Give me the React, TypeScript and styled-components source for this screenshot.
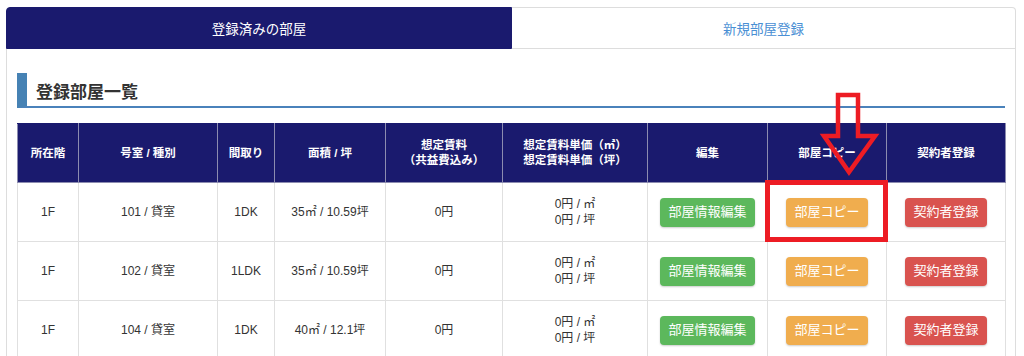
import React from 'react';
import styled, { createGlobalStyle } from 'styled-components';

const GlobalStyle = createGlobalStyle`
  html, body {
    margin: 0;
    padding: 0;
    background: #ffffff;
    font-family: "Liberation Sans", "Noto Sans CJK JP", sans-serif;
    color: #333333;
  }
`;

const Page = styled.div`
  position: relative;
  width: 1024px;
  height: 356px;
  overflow: hidden;
  padding: 7px 8px 0 6px;
  box-sizing: border-box;
`;

const Tabs = styled.div`
  display: grid;
  grid-template-columns: 506px 1fr;
  height: 42px;
`;

const Tab = styled.div<{ active?: boolean }>`
  display: flex;
  align-items: center;
  justify-content: center;
  font-size: 13.5px;
  border-radius: ${p => (p.active ? '4px 0 0 0' : '0 4px 0 0')};
  background: ${p => (p.active ? '#1a1a6e' : '#ffffff')};
  color: ${p => (p.active ? '#ffffff' : '#4a8fd4')};
  border: 1px solid ${p => (p.active ? '#1a1a6e' : '#dddddd')};
  border-left: ${p => (p.active ? '1px solid #1a1a6e' : 'none')};
  box-sizing: border-box;
`;

const Panel = styled.div`
  border-left: 1px solid #dddddd;
  border-right: 1px solid #dddddd;
  padding: 24px 10px 0 10px;
  height: 320px;
  box-sizing: border-box;
`;

const Heading = styled.h2`
  margin: 0 0 15px 0;
  height: 35px;
  display: flex;
  align-items: center;
  padding-left: 9px;
  border-left: 10px solid #4682b4;
  border-bottom: 2px solid #4a82bb;
  font-size: 17px;
  font-weight: bold;
  color: #333333;
  box-sizing: border-box;
  padding-top: 1px;
`;

const Table = styled.table`
  width: 988px;
  border-collapse: collapse;
  table-layout: fixed;
`;

const Th = styled.th`
  background: #1a1a6e;
  color: #ffffff;
  font-size: 11.5px;
  font-weight: bold;
  line-height: 15px;
  height: 59px;
  padding: 0;
  text-align: center;
  border: 1px solid #8c8cb0;
  border-top-color: #1a1a6e;
  box-sizing: border-box;
`;

const Td = styled.td`
  height: 59px;
  padding: 0;
  font-size: 12px;
  line-height: 16px;
  color: #333333;
  text-align: center;
  border: 1px solid #e0e0e0;
  box-sizing: border-box;
`;

const ActionButton = styled.span<{ tone: 'green' | 'orange' | 'red' }>`
  display: inline-flex;
  align-items: center;
  justify-content: center;
  height: 29px;
  padding: 0 8px;
  border-radius: 4px;
  font-size: 13px;
  color: #ffffff;
  background: ${p => (p.tone === 'green' ? '#5cb85c' : p.tone === 'orange' ? '#f0ad4e' : '#d9534f')};
  box-shadow: 0 1px 2px rgba(0, 0, 0, 0.2);
`;

const HighlightBox = styled.div`
  position: absolute;
  left: 765px;
  top: 180px;
  width: 123px;
  height: 62px;
  border: 5px solid #ed1c24;
  box-sizing: border-box;
`;

const ArrowMark = styled.svg`
  position: absolute;
  left: 815px;
  top: 88px;
`;

const rooms = [
  { floor: '1F', room: '101 / 貸室', layout: '1DK', area: '35㎡ / 10.59坪' },
  { floor: '1F', room: '102 / 貸室', layout: '1LDK', area: '35㎡ / 10.59坪' },
  { floor: '1F', room: '104 / 貸室', layout: '1DK', area: '40㎡ / 12.1坪' },
];

const widths = [61, 139, 57, 111, 117, 145, 120, 119, 119];

export default function App() {
  return (
    <Page>
      <GlobalStyle />
      <Tabs>
        <Tab active>登録済みの部屋</Tab>
        <Tab>新規部屋登録</Tab>
      </Tabs>
      <Panel>
        <Heading>登録部屋一覧</Heading>
        <Table>
          <colgroup>
            {widths.map((w, i) => (
              <col key={i} style={{ width: w }} />
            ))}
          </colgroup>
          <thead>
            <tr>
              <Th>所在階</Th>
              <Th>号室 / 種別</Th>
              <Th>間取り</Th>
              <Th>面積 / 坪</Th>
              <Th>
                想定賃料
                <br />
                （共益費込み）
              </Th>
              <Th>
                想定賃料単価（㎡）
                <br />
                想定賃料単価（坪）
              </Th>
              <Th>編集</Th>
              <Th>部屋コピー</Th>
              <Th>契約者登録</Th>
            </tr>
          </thead>
          <tbody>
            {rooms.map(r => (
              <tr key={r.room}>
                <Td>{r.floor}</Td>
                <Td>{r.room}</Td>
                <Td>{r.layout}</Td>
                <Td>{r.area}</Td>
                <Td>0円</Td>
                <Td>
                  0円 / ㎡
                  <br />
                  0円 / 坪
                </Td>
                <Td>
                  <ActionButton tone="green">部屋情報編集</ActionButton>
                </Td>
                <Td>
                  <ActionButton tone="orange">部屋コピー</ActionButton>
                </Td>
                <Td>
                  <ActionButton tone="red">契約者登録</ActionButton>
                </Td>
              </tr>
            ))}
          </tbody>
        </Table>
      </Panel>
      <HighlightBox />
      <ArrowMark width="70" height="95" viewBox="0 0 70 95">
        <polygon
          points="23,7 43,7 43,48 60,48 34,84 9,48 23,48"
          fill="none"
          stroke="#ed1c24"
          strokeWidth="4.5"
          strokeLinejoin="miter"
        />
      </ArrowMark>
    </Page>
  );
}
